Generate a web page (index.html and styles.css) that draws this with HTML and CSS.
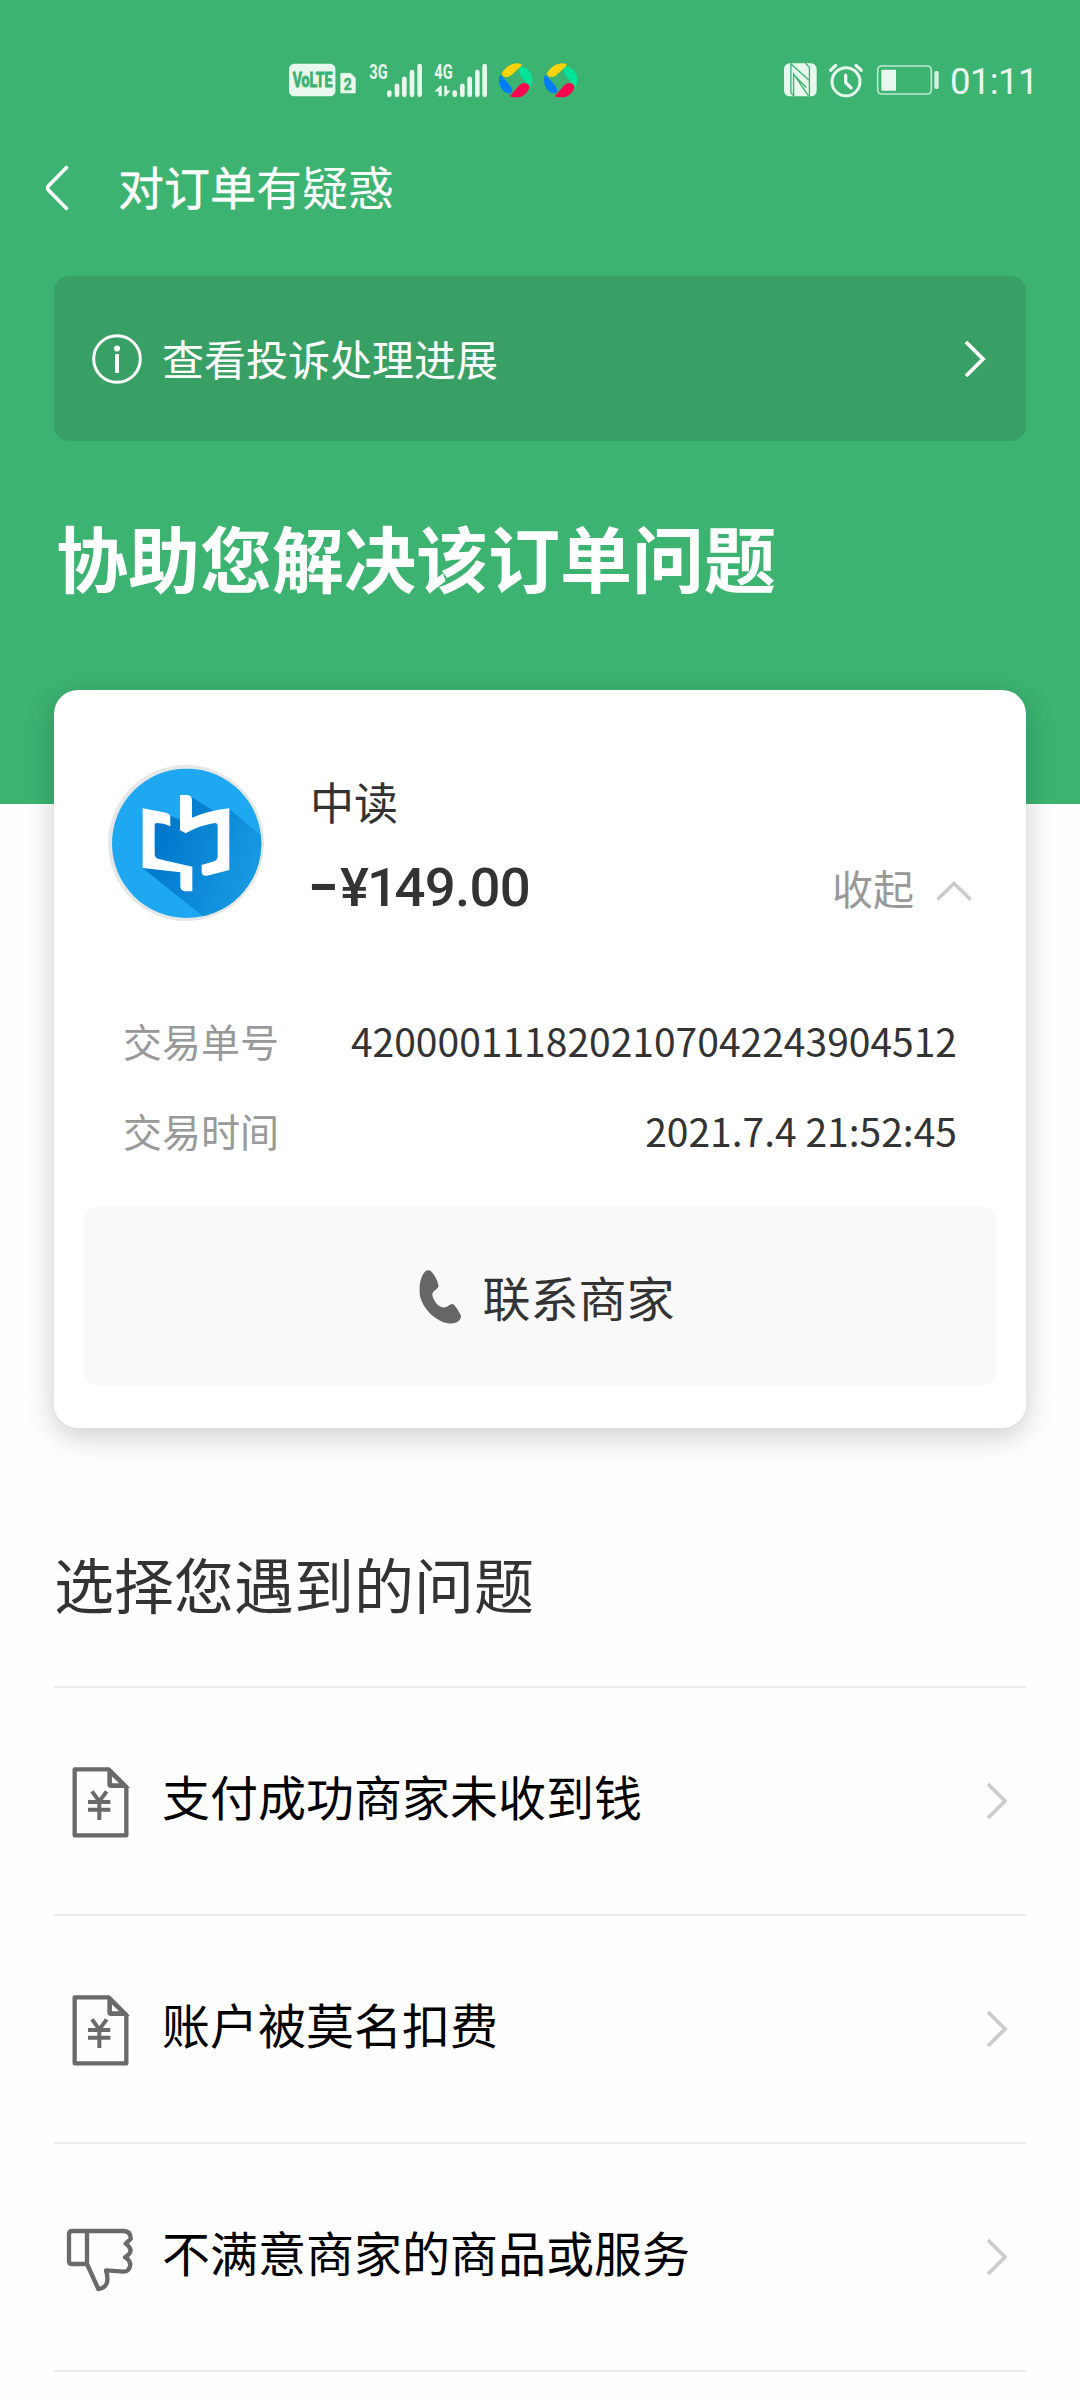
FILE: index.html
```html
<!DOCTYPE html>
<html lang="zh-CN">
<head>
<meta charset="utf-8">
<title>对订单有疑惑</title>
<link rel="stylesheet" href="styles.css">
</head>
<body>
<svg class="defs" width="0" height="0" aria-hidden="true">
  <symbol id="bill" viewBox="90 98 183 225">
    <path d="M104 111H206L259 164V309H104Z M209 113V159H257" fill="none" stroke="#6a6a6a" stroke-width="13" stroke-linejoin="round"/>
    <path d="M209 117L255 161H215Q209 161 209 155Z M156 177L178 207L200 177 M178 207V263 M144 209H211 M144 232H211" fill="none" stroke="#6a6a6a" stroke-width="12"/>
  </symbol>
  <symbol id="chevron" viewBox="0 0 22 40">
    <path d="M2 3L19 20L2 37" fill="none" stroke="currentColor" stroke-width="3.8"/>
  </symbol>
  <symbol id="pinwheel" viewBox="683 64 108 110">
    <path d="M694 98Q710 70 738 67Q760 67 752 76L722 104Q710 112 700 106Q694 103 694 98Z" fill="#ffd30a"/>
    <path d="M747 80Q768 74 781 97Q791 119 781 140Q778 137 773 130L752 106Q742 90 747 80Z" fill="#00e39a"/>
    <path d="M777 137Q775 155 756 166Q738 173 718 166L746 134Q758 122 770 129Q777 132 777 137Z" fill="#ff0350"/>
    <path d="M720 158Q702 159 692 141Q682 120 688 104L693 104L716 130Q730 147 724 154Z" fill="#007dff"/>
  </symbol>
</svg>

<header class="hero">
  <div class="status">
    <div class="status-left">
      <svg class="volte" viewBox="57 70 202 102">
        <rect x="57" y="72" width="140" height="98" rx="16" fill="#e8f8ef"/>
        <text x="68" y="143" class="st-bold" font-size="63" textLength="120" lengthAdjust="spacingAndGlyphs" fill="#3cb371" stroke="#3cb371" stroke-width="3">VoLTE</text>
        <path d="M213 101H243L257 115V160H213Z" fill="#e8f8ef" stroke="#e8f8ef" stroke-width="2" stroke-linejoin="round"/>
        <text x="222" y="151" class="st-bold" font-size="50" textLength="24" lengthAdjust="spacingAndGlyphs" fill="#3cb371" stroke="#3cb371" stroke-width="2">2</text>
      </svg>
      <svg class="signal" viewBox="297 66 162 104">
        <text x="298" y="113" class="st-bold" font-size="61" textLength="55" lengthAdjust="spacingAndGlyphs" fill="#e8f8ef">3G</text>
        <path d="M358 154V161 M381 134V161 M403 113V161 M426 93V161 M449 75V161" stroke="#e8f8ef" stroke-width="14" stroke-linecap="round"/>
      </svg>
      <svg class="signal" viewBox="491 66 162 104">
        <text x="492" y="113" class="st-bold" font-size="61" textLength="55" lengthAdjust="spacingAndGlyphs" fill="#e8f8ef">4G</text>
        <path d="M492 151L510 134H514V165H505V151Z M522 134H530V148H541L526 165H522Z" fill="#e8f8ef"/>
        <path d="M553 154V161 M576 134V161 M598 113V161 M621 93V161 M643 75V161" stroke="#e8f8ef" stroke-width="14" stroke-linecap="round"/>
      </svg>
      <svg class="wheel"><use href="#pinwheel"/></svg>
      <svg class="wheel"><use href="#pinwheel"/></svg>
    </div>
    <div class="status-right">
      <svg class="nfc" viewBox="72 68 100 101">
        <rect x="72" y="68" width="99" height="100" rx="17" fill="#e8f8ef"/>
        <path d="M93 68V158L105 169 M94 71L148 119 M101 168V100L147 168 M137 68L149 80V166 M101 102L140 142" fill="none" stroke="#3cb371" stroke-width="4"/>
      </svg>
      <svg class="alarm" viewBox="206 66 102 104">
        <circle cx="257" cy="122" r="42" fill="none" stroke="#e8f8ef" stroke-width="9"/>
        <path d="M256 102V124L272 140" fill="none" stroke="#e8f8ef" stroke-width="10" stroke-linecap="round" stroke-linejoin="round"/>
        <path d="M211 87L226 73 M303 87L287 73" stroke="#e8f8ef" stroke-width="10" stroke-linecap="round"/>
      </svg>
      <svg class="battery" viewBox="351 73 186 90">
        <rect x="353" y="76" width="161" height="84" rx="12" fill="none" stroke="#bfe9d0" stroke-width="5"/>
        <rect x="364" y="87" width="44" height="63" rx="3" fill="#e8f8ef"/>
        <rect x="523" y="91" width="13" height="54" rx="5" fill="#d3f1df"/>
      </svg>
      <span class="time">01:11</span>
    </div>
  </div>

  <nav class="navbar">
    <svg class="back" viewBox="0 0 26 48"><path d="M22.500 2.500L3 22.500Q2 24 3 25.500L22.500 45.500" fill="none" stroke="#fff" stroke-width="3.600"/></svg>
    <span class="nav-title"><span class="nav-strong">对订单</span>有疑惑</span>
  </nav>

  <a class="progress">
    <svg class="info" viewBox="0 0 50 50">
      <circle cx="25" cy="25" r="23.300" fill="none" stroke="#fff" stroke-width="3"/>
      <circle cx="25" cy="14.500" r="3" fill="#fff"/>
      <path d="M25 20V39" stroke="#fff" stroke-width="4"/>
    </svg>
    <span class="progress-text">查看投诉处理进展</span>
    <svg class="arrow arrow-white"><use href="#chevron"/></svg>
  </a>
  <h1 class="headline">协助您解决该订单问题</h1>
</header>

<main class="content">
  <section class="card">
    <div class="order">
      <svg class="avatar" viewBox="203 285 468 468">
        <defs>
          <linearGradient id="shade" x1="0" y1="0.300" x2="1" y2="0.700">
            <stop offset="0.150" stop-color="#0079cc"/>
            <stop offset="1" stop-color="#1d9fe6"/>
          </linearGradient>
          <clipPath id="disc"><circle cx="439" cy="520" r="224"/></clipPath>
        </defs>
        <circle cx="437" cy="519" r="234" fill="#e5e7e9"/>
        <circle cx="439" cy="520" r="224" fill="#1ea8f1"/>
        <g clip-path="url(#disc)">
          <path d="M307 594L343 460L390 438L419 449L455 382L521 423L567 417L680 510V760H514Z" fill="url(#shade)"/>
        </g>
        <path d="M307 415L377 428Q390 431 390 442V469Q370 459 350 459Q343 459 343 466V552Q343 564 355 567L456 590V664H434Q420 662 420 647V607L307 594Z" fill="#fff"/>
        <path d="M419 375H441Q455 377 455 391V443Q510 420 567 415V600L500 617Q484 619 484 605V585L521 574Q532 570 532 558V467Q532 459 524 459Q480 465 436 490L419 481Z" fill="#fff"/>
      </svg>
      <div class="order-main">
        <div class="merchant">中读</div>
        <div class="amount-row">
          <span class="amount"><span class="minus">−</span><span class="yen">¥</span><span class="one">1</span>49.00</span>
          <span class="fold">收起<svg class="fold-icon" viewBox="0 0 36 20"><path d="M1.500 18.500L18 2.500L34.500 18.500" fill="none" stroke="#cbcbcb" stroke-width="3.500"/></svg></span>
        </div>
      </div>
    </div>
    <dl class="details">
      <div class="detail"><dt>交易单号</dt><dd>4200001118202107042243904512</dd></div>
      <div class="detail"><dt>交易时间</dt><dd>2021.7.4 21:52:45</dd></div>
    </dl>
    <button class="contact" type="button">
      <svg class="phone" viewBox="0 0 43 54"><path d="M11 0.500C14 2.500 18.500 9 19.500 16C19 20 12.500 20 13.500 26C15 32 20 37.500 25 37.500C28 37.500 31 34 33.500 34C36 35 40 41 42 46C42 51 37 53.500 31 53.500C20 53 5 42 1 26C-0.500 15 2 4 7.500 0.500Q9 -0.200 11 0.500Z" fill="#666"/></svg>
      <span>联系商家</span>
    </button>
  </section>

  <section class="issues">
    <h2 class="issues-title">选择您遇到的问题</h2>
    <ul class="issue-list">
      <li class="issue">
        <svg class="issue-icon"><use href="#bill"/></svg>
        <span class="issue-text">支付成功商家未收到钱</span>
        <svg class="arrow"><use href="#chevron"/></svg>
      </li>
      <li class="issue">
        <svg class="issue-icon"><use href="#bill"/></svg>
        <span class="issue-text">账户被莫名扣费</span>
        <svg class="arrow"><use href="#chevron"/></svg>
      </li>
      <li class="issue">
        <svg class="issue-icon thumb" viewBox="77 788 204 225">
          <path d="M96 815H250Q272 816 271 839L256 853Q266 858 271 872Q270 884 254 894Q266 899 270 914Q269 936 250 937L197 933Q212 984 174 989L140 914H96Q86 914 86 904V825Q86 815 96 815Z M140 815V914" fill="none" stroke="#6a6a6a" stroke-width="13" stroke-linejoin="round"/>
        </svg>
        <span class="issue-text">不满意商家的商品或服务</span>
        <svg class="arrow"><use href="#chevron"/></svg>
      </li>
    </ul>
  </section>
</main>
</body>
</html>
```
FILE: styles.css
```css
* { box-sizing: border-box; }

body {
  margin: 0;
  width: 1080px;
  height: 2400px;
  overflow: hidden;
  background: #fefefe;
  color: #333;
  font-family: "Noto Sans CJK SC", sans-serif;
}

svg { display: block; flex: none; overflow: visible; }
.defs { position: absolute; }

/* Green header */
.hero {
  height: 804px;
  padding: 0 54px;
  background: #3cb371;
  color: #fff;
}

.status {
  display: flex;
  justify-content: space-between;
  align-items: center;
  height: 160px;
  margin: 0 -54px;
  padding: 0 45px 0 289px;
}
.status-left, .status-right { display: flex; align-items: center; }
.volte { width: 67px; height: 34px; margin-right: 13px; }
.signal { width: 54px; height: 35px; margin-right: 11px; }
.signal + .wheel { margin-left: -1px; }
.wheel { width: 36px; height: 37px; margin-right: 9px; }
.st-bold { font-family: Roboto, sans-serif; font-weight: 700; }
.nfc { width: 33px; height: 34px; margin-right: 12px; }
.alarm { width: 34px; height: 35px; margin-right: 14px; }
.battery { width: 62px; height: 30px; margin-right: 11px; }
.time {
  width: 85px;
  color: #e8f8ef;
  font: 36.500px/44px Roboto, sans-serif;
  letter-spacing: -0.600px;
  padding-top: 4px;
  white-space: nowrap;
}

.navbar {
  display: flex;
  align-items: center;
  height: 56px;
  margin-left: -9px;
}
.back { width: 26px; height: 48px; margin-right: 47px; }
.nav-title { font-size: 46px; line-height: 56px; padding-bottom: 6px; }
.nav-strong { -webkit-text-stroke: 0.4px #fff; }

.progress {
  display: flex;
  align-items: center;
  height: 165px;
  margin-top: 60px;
  padding: 0 40px 0 38px;
  border-radius: 15px;
  background: #38a065;
}
.info { width: 50px; height: 50px; margin-right: 20px; }
.progress-text { flex: 1; font-size: 42px; line-height: 60px; padding-bottom: 2px; }

.headline {
  margin: 71px 0 0 2px;
  font-size: 72px;
  line-height: 88px;
  font-weight: 700;
}

.arrow { width: 22px; height: 40px; color: #cdcdcd; }
.arrow-white { color: #fff; }

/* Order card */
.content { padding: 0 54px; }

.card {
  position: relative;
  height: 738px;
  margin-top: -114px;
  padding: 75px 30px 0;
  border-radius: 24px;
  background: #fff;
  box-shadow: 0 8px 30px rgba(0, 0, 0, 0.2);
}
.order { display: flex; height: 156px; padding: 0 23px 0 24px; }
.avatar { width: 156px; height: 156px; margin-right: 46px; }
.order-main { flex: 1; }
.merchant { margin-top: 11px; font-size: 44px; line-height: 50px; }
.amount-row {
  display: flex;
  justify-content: space-between;
  align-items: center;
  height: 60px;
  margin-top: 31px;
}
.amount {
  display: flex;
  align-items: center;
  font: 500 54.500px/60px Roboto, sans-serif;
  letter-spacing: -0.700px;
}
.minus { width: 32px; margin-left: -2px; font-weight: 700; }
.yen { letter-spacing: -2px; }
.one { letter-spacing: -3.500px; }
.fold {
  display: flex;
  align-items: center;
  gap: 22px;
  margin-right: 1px;
  color: #999;
  font-size: 41px;
  line-height: 60px;
}
.fold-icon { width: 36px; height: 20px; margin-top: 7px; }

.details {
  margin: 89px 39px 0 40px;
  font-size: 39px;
}
.detail {
  display: flex;
  justify-content: space-between;
  height: 90px;
  line-height: 60px;
}
.detail dt { margin-left: -1px; color: #999; }
.detail dd { margin: 0; }

.contact {
  display: flex;
  align-items: center;
  justify-content: center;
  width: 912px;
  height: 180px;
  margin-top: 16px;
  padding: 0 0 0 14px;
  border: 0;
  border-radius: 15px;
  background: #f9f9f9;
  color: #333;
  font: 48px/60px "Noto Sans CJK SC", sans-serif;
}
.phone { width: 43px; height: 54px; margin: 2px 20px 0 0; }

/* Problem list */
.issues-title {
  margin: 115px 0 0;
  font-size: 60px;
  line-height: 80px;
  font-weight: 400;
}
.issue-list {
  margin: 63px 0 0;
  padding: 0;
  list-style: none;
  border-top: 2px solid #ebebeb;
}
.issue {
  display: flex;
  align-items: center;
  height: 228px;
  padding: 0 18px 0 16px;
  border-bottom: 2px solid #ebebeb;
}
.issue-icon { width: 61px; height: 75px; margin: 2px 31px 0 0; }
.thumb { width: 68px; margin: 4px 28px 0 -4px; }
.issue-text {
  flex: 1;
  color: #000;
  font-size: 48px;
  line-height: 60px;
  padding-bottom: 12px;
}
```
